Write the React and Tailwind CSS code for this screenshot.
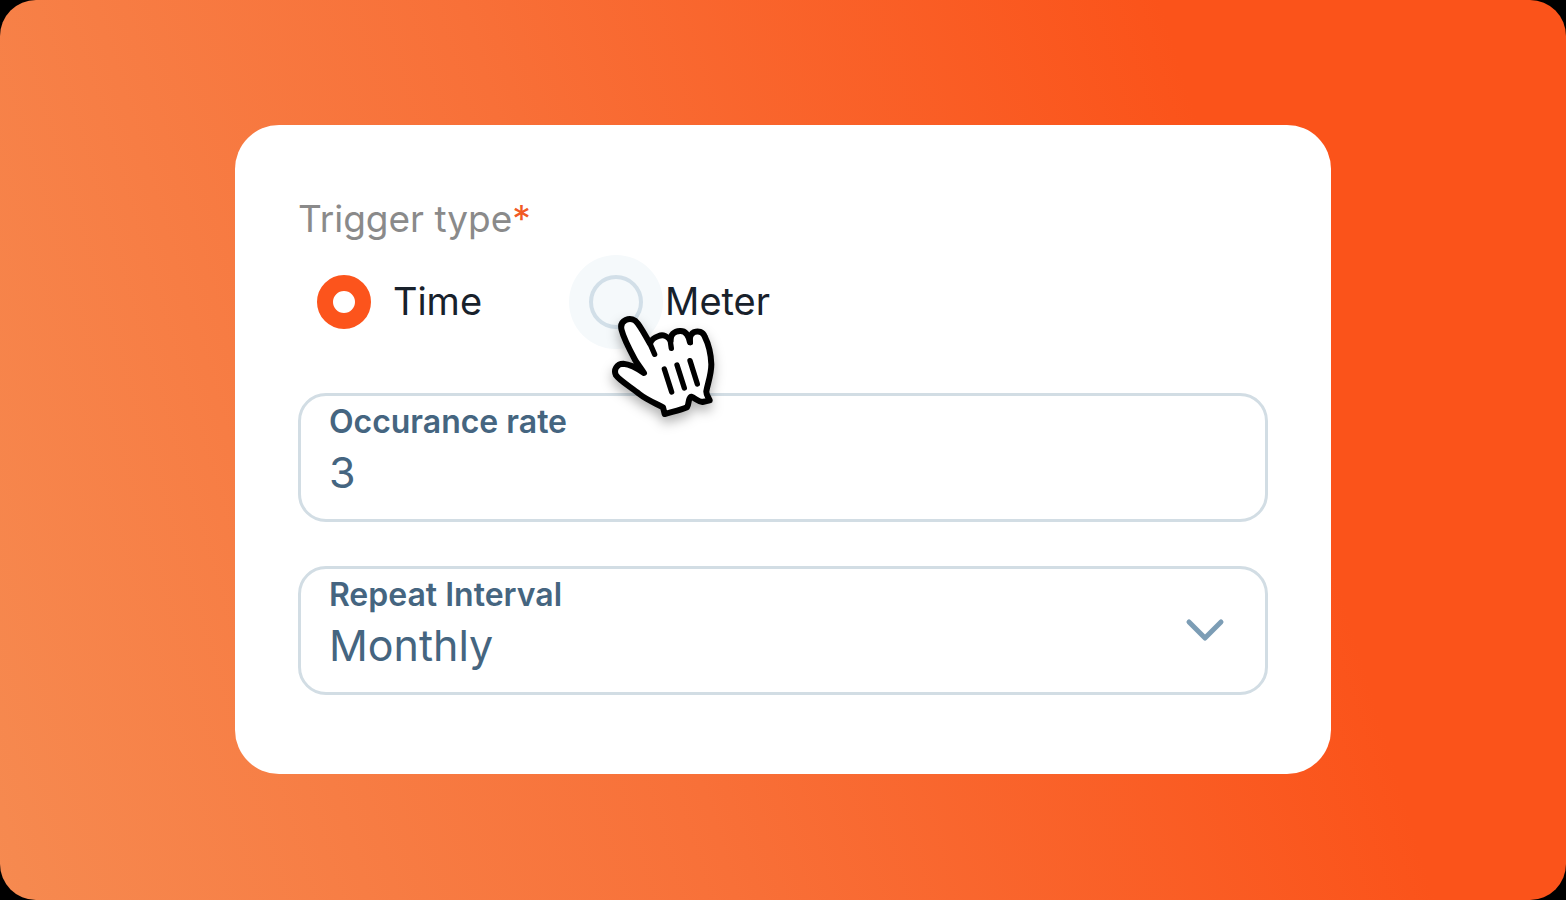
import { useState } from 'react';

const triggerTypes = ['Time', 'Meter'];

function HandCursor() {
    return (
        <svg
            viewBox="150 195 330 330"
            className="pointer-events-none absolute top-[37px] left-[21px] z-10 size-[110px] overflow-visible drop-shadow-[0_6px_6px_rgba(0,0,0,0.3)]"
            fill="none"
            stroke="#000"
            strokeWidth="18"
            strokeLinejoin="round"
            strokeLinecap="round"
            aria-hidden="true"
        >
            <path
                fill="#fff"
                d="M252 378 C238 368 214 352 190 350 C170 350 160 369 168 385 C180 402 212 420 238 441 C262 460 290 470 309 481 L314 501 C338 494 362 490 381 481 C388 471 383 456 393 449 C405 453 415 464 427 465 L449 460 C444 449 438 442 439 433 C443 409 454 384 454 352 C453 322 444 288 434 268 C428 254 415 251 403 255 C393 260 388 267 390 286 C386 266 376 251 360 252 C342 253 331 263 332 281 C323 267 309 262 296 267 C284 271 274 276 270 290 C259 270 247 248 234 230 C225 217 211 213 197 219 C184 225 181 235 185 250 C192 278 213 316 226 340 C235 354 244 365 252 378 Z"
            />
            <path d="M270 290 L284 322 M330 276 L334 304 M389 272 L391 287" strokeWidth="16" />
            <path d="M313 366 L335 435 M351 354 L373 423 M390 341 L412 411" strokeWidth="16" />
        </svg>
    );
}

export default function App() {
    const [trigger, setTrigger] = useState('Time');
    const [rate, setRate] = useState('3');
    const [interval, setInterval] = useState('Monthly');

    return (
        <div className="bg-black font-['Inter',sans-serif]">
            <main className="flex min-h-screen items-center rounded-[36px] bg-[linear-gradient(73deg,#f68a50_0%,#f87038_40%,#fb531a_78%)] px-[15%] pb-0.5">
                <form className="w-full rounded-[44px] bg-white px-[63px] pt-[70px] pb-[79px]">
                    <fieldset>
                        <legend className="text-[37px] leading-12 text-[#8a8a8a]">
                            Trigger type<span className="text-[#f15a24]">*</span>
                        </legend>
                        <div className="mt-8 flex gap-[107px] pl-[19px]">
                            {triggerTypes.map((type) => (
                                <div key={type} className="relative flex items-center gap-[22px]">
                                    <input
                                        type="radio"
                                        id={type}
                                        name="trigger"
                                        checked={trigger === type}
                                        onChange={() => setTrigger(type)}
                                        className={
                                            trigger === type
                                                ? 'size-[54px] appearance-none rounded-full border-[16px] border-[#fc541c] bg-white'
                                                : 'size-[54px] appearance-none rounded-full border-4 border-[#d2dfe8] bg-[#f5f9fb] ring-[20px] ring-[#f5f9fb]'
                                        }
                                    />
                                    <label htmlFor={type} className="relative pb-0.5 text-[38px] leading-12 text-[#18212b]">
                                        {type}
                                    </label>
                                    {type === 'Meter' && <HandCursor />}
                                </div>
                            ))}
                        </div>
                    </fieldset>

                    <div className="mt-16 rounded-[28px] border-3 border-[#d2dde4] px-7 pt-[6px] pb-[19px] text-[#456580]">
                        <label htmlFor="rate" className="block text-[32px] leading-10 font-semibold">
                            Occurance rate
                        </label>
                        <input
                            id="rate"
                            type="text"
                            value={rate}
                            onChange={(e) => setRate(e.target.value)}
                            className="mt-1 mb-0.5 block h-[52px] w-full text-[43px] leading-[52px] outline-none"
                        />
                    </div>

                    <div className="mt-11 flex items-center rounded-[28px] border-3 border-[#d2dde4] pr-10 pl-7 text-[#456580]">
                        <div className="flex-1 pt-[6px] pb-[19px]">
                            <label htmlFor="interval" className="block text-[32px] leading-10 font-semibold">
                                Repeat Interval
                            </label>
                            <select
                                id="interval"
                                value={interval}
                                onChange={(e) => setInterval(e.target.value)}
                                className="mt-1 mb-0.5 block h-[52px] w-full appearance-none text-[43px] leading-[52px] outline-none"
                            >
                                <option>Monthly</option>
                            </select>
                        </div>
                        <svg viewBox="0 0 40 24" className="w-10" fill="none" stroke="#7c9db5" strokeWidth="5" strokeLinecap="round" strokeLinejoin="round" aria-hidden="true">
                            <path d="M4 4 L20 20 L36 4" />
                        </svg>
                    </div>
                </form>
            </main>
        </div>
    );
}
